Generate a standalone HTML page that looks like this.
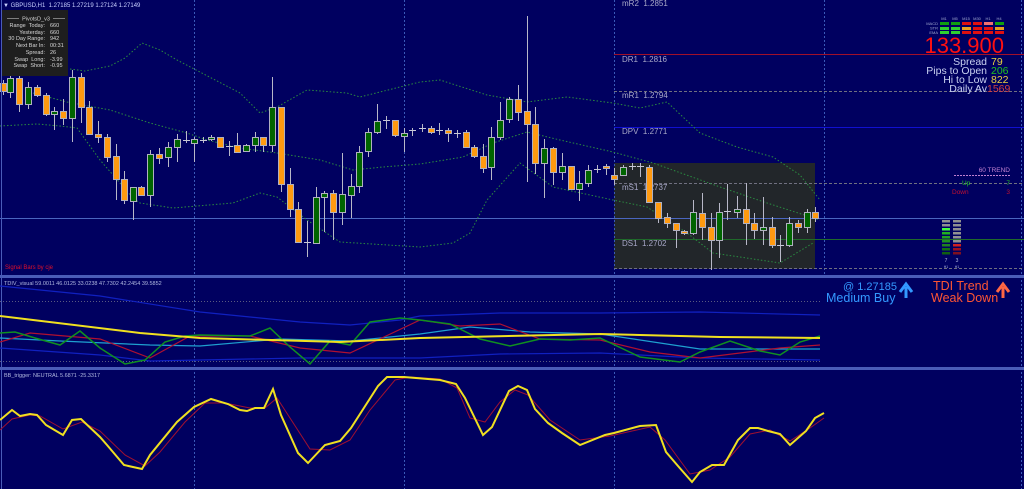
<!DOCTYPE html>
<html><head><meta charset="utf-8"><style>
html,body{margin:0;padding:0;background:#000060;overflow:hidden}
svg{display:block}
text{font-family:"Liberation Sans",sans-serif}
</style></head><body>
<svg width="1024" height="489" viewBox="0 0 1024 489" xmlns="http://www.w3.org/2000/svg">
<rect width="1024" height="489" fill="#000060"/>
<!-- gray box -->
<rect x="614" y="163" width="201" height="106" fill="#22262a"/>
<!-- vertical dashed grid -->
<g stroke="#3a5ab8" stroke-width="1" stroke-dasharray="2,2">
<line x1="194.5" y1="0" x2="194.5" y2="489"/><line x1="404.5" y1="0" x2="404.5" y2="489"/>
<line x1="614.5" y1="0" x2="614.5" y2="489"/><line x1="824.5" y1="0" x2="824.5" y2="276"/>
<line x1="1021.5" y1="0" x2="1021.5" y2="489"/>
</g>
<!-- pivot lines -->
<line x1="614" y1="54.5" x2="1024" y2="54.5" stroke="#a0102a"/>
<line x1="614" y1="91.5" x2="1024" y2="91.5" stroke="#707080" stroke-dasharray="3,2"/>
<line x1="614" y1="127.5" x2="1024" y2="127.5" stroke="#1010d0"/>
<line x1="614" y1="183.5" x2="1024" y2="183.5" stroke="#707080" stroke-dasharray="3,2"/>
<line x1="0" y1="218.5" x2="1024" y2="218.5" stroke="#4a66c0"/>
<line x1="614" y1="239.5" x2="1024" y2="239.5" stroke="#1f6a2a"/>
<line x1="614" y1="268.5" x2="1024" y2="268.5" stroke="#707080" stroke-dasharray="3,2"/>
<g fill="#a8a8c8" font-size="8">
<text x="622" y="6">mR2 &#160;1.2851</text><text x="622" y="62">DR1 &#160;1.2816</text>
<text x="622" y="98">mR1 &#160;1.2794</text><text x="622" y="134">DPV &#160;1.2771</text>
<text x="622" y="190">mS1 &#160;1.2737</text><text x="622" y="246">DS1 &#160;1.2702</text>
</g>
<!-- bollinger -->
<g fill="none" stroke="#2a8a40" stroke-width="1" stroke-dasharray="1.5,2">
<polyline points="70,69 85,71 110,66 125,58 142,43 160,50 177,60 240,93 260,113 277,107 307,90 347,93 360,97 420,82 440,80 487,95 527,102 567,97 613,103 640,108 667,102 700,133 737,147 773,157 800,175 820,200"/>
<polyline points="0,126 37,124 60,126 77,128 100,160 133,198 140,203 173,208 233,203 260,193 277,197 307,220 340,242 420,247 453,243 470,233 487,200 520,163 553,187 613,200 647,207 687,233 713,253 780,263 813,243"/>
<polyline points="33,93 67,102 110,110 150,123 187,133 207,140 240,148 277,153 320,160 353,170 383,167 420,164 463,157 493,143 527,132 560,140 613,152 653,163 720,187 767,203 820,220"/>
</g>
<!-- wicks -->
<path stroke="#b8b8c8" stroke-width="1" fill="none" d="M3.5 80V95M10.5 75V98M19.5 75V112M28.5 82V109M37.5 85V97M46.5 93V116M54.5 107V130M63.5 99V125M72.5 70V142M81.5 73V123M89.5 101V135M98.5 121V143M107.5 134V162M116.5 144V200M124.5 171V204M133.5 187V220M141.5 186V196M150.5 150V207M159.5 148V164M168.5 142V167M177.5 134V162M186.5 131V143M194.5 137V162M203.5 137V143M211.5 135V141M220.5 137V147M229.5 141V156M237.5 133V152M246.5 144V152M255.5 132V152M263.5 137V152M272.5 77V152M281.5 107V192M290.5 168V217M298.5 202V242M307.5 221V257M316.5 187V243M324.5 191V232M333.5 190V240M342.5 153V225M351.5 174V218M359.5 146V193M368.5 128V157M377.5 104V134M386.5 116V129M395.5 120V137M404.5 128V152M412.5 128V136M422.5 124V132M431.5 126V134M439.5 123V135M448.5 128V142M457.5 130V138M466.5 130V148M474.5 145V158M483.5 144V173M491.5 127V180M500.5 102V140M509.5 97V123M518.5 85V121M527.5 16V182M535.5 107V174M544.5 139V198M553.5 147V185M562.5 153V180M571.5 166V189M579.5 171V201M588.5 165V187M597.5 165V173M606.5 164V175M614.5 168V185M623.5 165V176M632.5 163V170M640.5 163V177M649.5 165V203M658.5 202V223M667.5 213V228M676.5 223V248M684.5 230V235M693.5 200V235M702.5 193V240M711.5 213V270M719.5 203V258M727.5 184V220M737.5 196V218M746.5 183V245M754.5 213V239M763.5 197V245M772.5 217V248M780.5 235V262M789.5 217V247M798.5 220V233M807.5 209V233M815.5 207V222"/>
<!-- dojis -->
<path stroke="#c8c8d8" stroke-width="1" d="M183 140.5h7M200 140.5h7M226 146.5h7M304 242.5h7M383 120.5h7M409 130.5h7M419 128.5h7M436 130.5h7M454 133.5h7M594 169.5h7M629 166.5h7M637 166.5h7M724 211.5h7M777 245.5h7"/>
<!-- orange bodies -->
<g fill="#ff9a10" stroke="#b0b0c0" stroke-width="1">
<rect x="0.5" y="83.5" width="6" height="8"/><rect x="16.5" y="78.5" width="6" height="26"/><rect x="34.5" y="87.5" width="6" height="8"/><rect x="43.5" y="95.5" width="6" height="19"/><rect x="60.5" y="111.5" width="6" height="7"/><rect x="78.5" y="77.5" width="6" height="30"/><rect x="86.5" y="107.5" width="6" height="27"/><rect x="95.5" y="134.5" width="6" height="3"/><rect x="104.5" y="137.5" width="6" height="20"/><rect x="113.5" y="156.5" width="6" height="23"/><rect x="121.5" y="179.5" width="6" height="21"/><rect x="138.5" y="187.5" width="6" height="8"/><rect x="156.5" y="154.5" width="6" height="4"/><rect x="217.5" y="137.5" width="6" height="10"/><rect x="234.5" y="145.5" width="6" height="7"/><rect x="260.5" y="137.5" width="6" height="8"/><rect x="278.5" y="107.5" width="6" height="77"/><rect x="287.5" y="184.5" width="6" height="25"/><rect x="295.5" y="209.5" width="6" height="33"/><rect x="330.5" y="193.5" width="6" height="19"/><rect x="392.5" y="120.5" width="6" height="15"/><rect x="428.5" y="128.5" width="6" height="4"/><rect x="445.5" y="130.5" width="6" height="3"/><rect x="463.5" y="132.5" width="6" height="15"/><rect x="471.5" y="147.5" width="6" height="9"/><rect x="480.5" y="156.5" width="6" height="12"/><rect x="515.5" y="99.5" width="6" height="13"/><rect x="524.5" y="111.5" width="6" height="13"/><rect x="532.5" y="124.5" width="6" height="39"/><rect x="550.5" y="148.5" width="6" height="24"/><rect x="568.5" y="166.5" width="6" height="23"/><rect x="603.5" y="166.5" width="6" height="2"/><rect x="611.5" y="175.5" width="6" height="4"/><rect x="646.5" y="167.5" width="6" height="35"/><rect x="655.5" y="202.5" width="6" height="16"/><rect x="664.5" y="217.5" width="6" height="6"/><rect x="673.5" y="223.5" width="6" height="7"/><rect x="681.5" y="231.5" width="6" height="2"/><rect x="699.5" y="213.5" width="6" height="14"/><rect x="708.5" y="227.5" width="6" height="13"/><rect x="743.5" y="209.5" width="6" height="14"/><rect x="751.5" y="223.5" width="6" height="7"/><rect x="769.5" y="227.5" width="6" height="18"/><rect x="795.5" y="223.5" width="6" height="4"/><rect x="812.5" y="212.5" width="6" height="6"/>
</g>
<!-- green bodies -->
<g fill="#006400" stroke="#b0b0c0" stroke-width="1">
<rect x="7.5" y="78.5" width="6" height="14"/><rect x="25.5" y="87.5" width="6" height="17"/><rect x="51.5" y="111.5" width="6" height="3"/><rect x="69.5" y="77.5" width="6" height="41"/><rect x="130.5" y="187.5" width="6" height="14"/><rect x="147.5" y="154.5" width="6" height="41"/><rect x="165.5" y="147.5" width="6" height="10"/><rect x="174.5" y="139.5" width="6" height="8"/><rect x="191.5" y="139.5" width="6" height="4"/><rect x="208.5" y="137.5" width="6" height="2"/><rect x="243.5" y="145.5" width="6" height="6"/><rect x="252.5" y="137.5" width="6" height="8"/><rect x="269.5" y="107.5" width="6" height="38"/><rect x="313.5" y="197.5" width="6" height="46"/><rect x="321.5" y="193.5" width="6" height="4"/><rect x="339.5" y="194.5" width="6" height="18"/><rect x="348.5" y="186.5" width="6" height="9"/><rect x="356.5" y="152.5" width="6" height="34"/><rect x="365.5" y="132.5" width="6" height="19"/><rect x="374.5" y="121.5" width="6" height="11"/><rect x="401.5" y="133.5" width="6" height="3"/><rect x="488.5" y="137.5" width="6" height="30"/><rect x="497.5" y="120.5" width="6" height="17"/><rect x="506.5" y="99.5" width="6" height="20"/><rect x="541.5" y="148.5" width="6" height="15"/><rect x="559.5" y="166.5" width="6" height="6"/><rect x="576.5" y="183.5" width="6" height="6"/><rect x="585.5" y="170.5" width="6" height="13"/><rect x="620.5" y="167.5" width="6" height="8"/><rect x="690.5" y="212.5" width="6" height="21"/><rect x="716.5" y="212.5" width="6" height="28"/><rect x="734.5" y="209.5" width="6" height="3"/><rect x="760.5" y="227.5" width="6" height="3"/><rect x="786.5" y="223.5" width="6" height="22"/><rect x="804.5" y="212.5" width="6" height="15"/>
</g>
<!-- header -->
<text x="3" y="7" font-size="6" fill="#c8d0ff">▼ GBPUSD,H1 &#160;1.27185 1.27219 1.27124 1.27149</text>
<!-- pivot info box -->
<rect x="2" y="10" width="66" height="66" fill="#1e1e1e"/>
<g font-size="5.5" fill="#d8d8d8">
<line x1="7" y1="18.5" x2="19" y2="18.5" stroke="#c0c0c0" stroke-width="0.6"/>
<line x1="53" y1="18.5" x2="65" y2="18.5" stroke="#c0c0c0" stroke-width="0.6"/>
<text x="36" y="20.5" text-anchor="middle">PivotsD_v3</text>
<g text-anchor="end"><text x="45" y="27">Range &#160;Today:</text><text x="45" y="34">Yesterday:</text><text x="45" y="40">30 Day Range:</text><text x="45" y="47">Next Bar In:</text><text x="45" y="54">Spread:</text><text x="45" y="61">Swap &#160;Long:</text><text x="45" y="67">Swap &#160;Short:</text></g>
<text x="50" y="27">660</text><text x="50" y="34">660</text><text x="50" y="40">942</text><text x="50" y="47">00:31</text><text x="50" y="54">26</text><text x="50" y="61">-3.99</text><text x="50" y="67">-0.95</text>
</g>
<text x="5" y="269" font-size="6" fill="#e0102a">Signal Bars by cje</text>
<!-- right panel -->
<g font-size="4" fill="#a0a8d0" text-anchor="middle"><text x="944" y="20">M1</text><text x="955" y="20">M5</text><text x="966" y="20">M15</text><text x="977" y="20">M30</text><text x="988" y="20">H1</text><text x="999" y="20">H4</text></g>
<g font-size="4" fill="#a0a8d0" text-anchor="end"><text x="938" y="25">MACD</text><text x="938" y="29.5">STR</text><text x="938" y="34">EMA</text></g>
<g>
<rect x="940" y="22" width="9" height="3" fill="#10a010"/><rect x="951" y="22" width="9" height="3" fill="#10a010"/><rect x="962" y="22" width="9" height="3" fill="#e01010"/><rect x="973" y="22" width="9" height="3" fill="#e01010"/><rect x="984" y="22" width="9" height="3" fill="#f07070"/><rect x="995" y="22" width="9" height="3" fill="#10a010"/>
<rect x="940" y="27" width="9" height="3" fill="#30d030"/><rect x="951" y="27" width="9" height="3" fill="#30d030"/><rect x="962" y="27" width="9" height="3" fill="#e8a020"/><rect x="973" y="27" width="9" height="3" fill="#e01010"/><rect x="984" y="27" width="9" height="3" fill="#e01010"/><rect x="995" y="27" width="9" height="3" fill="#e8a020"/>
<rect x="940" y="31" width="9" height="3" fill="#30d030"/><rect x="951" y="31" width="9" height="3" fill="#30d030"/><rect x="962" y="31" width="9" height="3" fill="#e01010"/><rect x="973" y="31" width="9" height="3" fill="#e01010"/><rect x="984" y="31" width="9" height="3" fill="#e01010"/><rect x="995" y="31" width="9" height="3" fill="#e01010"/>
</g>
<text x="1004" y="53" font-size="22" fill="#ff1010" text-anchor="end">133.900</text>
<g font-size="10.5" fill="#c8d0f0" text-anchor="end"><text x="987" y="65">Spread</text><text x="987" y="74">Pips to Open</text><text x="987" y="83">Hi to Low</text><text x="987" y="92">Daily Av</text></g>
<g font-size="10.5"><text x="991" y="65" fill="#e8d040">79</text><text x="991" y="74" fill="#20c020">206</text><text x="991" y="83" fill="#e8d040">822</text><text x="987" y="92" fill="#d04040">1569</text></g>
<text x="1010" y="172" font-size="6.5" fill="#c080d0" text-anchor="end">60 TREND</text>
<line x1="954" y1="175.5" x2="1010" y2="175.5" stroke="#c080d0" stroke-dasharray="2,1"/>
<text x="962" y="185" font-size="6.5" fill="#20c020">Up</text><text x="1010" y="185" font-size="6.5" fill="#20c020" text-anchor="end">7</text>
<text x="952" y="194" font-size="6.5" fill="#c01030">Down</text><text x="1010" y="194" font-size="6.5" fill="#c01030" text-anchor="end">3</text>
<g>
<rect x="942" y="220" width="8" height="2.5" fill="#909090"/><rect x="942" y="224" width="8" height="2.5" fill="#909090"/><rect x="942" y="228" width="8" height="2.5" fill="#40ff40"/><rect x="942" y="232" width="8" height="2.5" fill="#20b020"/><rect x="942" y="236" width="8" height="2.5" fill="#20a020"/><rect x="942" y="240" width="8" height="2.5" fill="#209020"/><rect x="942" y="244" width="8" height="2.5" fill="#208020"/><rect x="942" y="248" width="8" height="2.5" fill="#107010"/><rect x="942" y="252" width="8" height="2.5" fill="#106010"/>
<rect x="953" y="220" width="8" height="2.5" fill="#909090"/><rect x="953" y="224" width="8" height="2.5" fill="#909090"/><rect x="953" y="228" width="8" height="2.5" fill="#909090"/><rect x="953" y="232" width="8" height="2.5" fill="#909090"/><rect x="953" y="236" width="8" height="2.5" fill="#909090"/><rect x="953" y="240" width="8" height="2.5" fill="#909090"/><rect x="953" y="244" width="8" height="2.5" fill="#d02020"/><rect x="953" y="248" width="8" height="2.5" fill="#a01020"/><rect x="953" y="252" width="8" height="2.5" fill="#801020"/>
</g>
<g font-size="5" fill="#b0b8e0" text-anchor="middle"><text x="946" y="262">7</text><text x="957" y="262">3</text><text x="946" y="268" font-size="3.5">H1</text><text x="957" y="268" font-size="3.5">H1</text></g>
<!-- separators -->
<rect x="0" y="275" width="1024" height="3" fill="#4a5cb8"/>
<rect x="0" y="367" width="1024" height="3" fill="#4a5cb8"/>
<line x1="1.5" y1="0" x2="1.5" y2="489" stroke="#4a5cb8"/>
<!-- TDI pane right text -->
<text x="843" y="290" font-size="11" fill="#3399ff">@ 1.27185</text>
<text x="826" y="302" font-size="12.5" fill="#3399ff">Medium Buy</text>
<path d="M906 298V287M900 292L906 284L912 292" stroke="#3399ff" stroke-width="3" fill="none"/>
<text x="933" y="290" font-size="12.5" fill="#ff5533">TDI Trend</text>
<text x="931" y="302" font-size="12.5" fill="#ff5533">Weak Down</text>
<path d="M1003 298V287M997 292L1003 284L1009 292" stroke="#ff6644" stroke-width="3" fill="none"/>
<text x="4" y="285" font-size="5.5" fill="#b0b8e0">TDIV_visual 59.0011 46.0125 33.0238 47.7302 42.2454 39.5852</text>
<g stroke="#5a5a80" stroke-dasharray="1,2"><line x1="0" y1="301.5" x2="820" y2="301.5"/><line x1="0" y1="361.5" x2="820" y2="361.5"/></g>
<g fill="none" stroke-width="1.2">
<polyline stroke="#1020c0" points="0,286 100,296 200,312 300,322 350,325 400,320 420,316 500,313 600,313 700,312 820,315"/>
<polyline stroke="#1020c0" points="0,348 100,355 150,361 200,360 300,358 420,358 500,354 600,353 700,358 820,360"/>
<polyline stroke="#1ea0d0" points="0,338 60,341 150,345 200,346 280,339 350,341 420,334 470,327 530,332 600,334 700,349 800,349 820,349"/>
<polyline stroke="#b01030" points="0,342 30,333 100,339 150,358 190,336 250,336 300,348 350,353 420,320 460,326 500,324 540,339 600,340 650,352 700,358 780,348 820,345"/>
<polyline stroke="#109020" stroke-width="1.5" points="0,333 15,332 35,338 60,345 80,331 100,348 125,364 145,360 165,342 185,336 200,335 250,336 270,328 290,347 310,364 330,341 350,345 370,322 400,318 420,320 450,324 480,339 510,346 540,339 570,340 600,338 640,357 680,362 700,352 730,341 760,351 780,355 800,342 820,336"/>
<polyline stroke="#f0e020" stroke-width="2" points="0,316 140,333 200,338 340,342 420,338 600,334 720,337 820,338"/>
</g>
<!-- BB pane -->
<text x="4" y="377" font-size="5.5" fill="#b0b8e0">BB_trigger: NEUTRAL 5.6871 -25.3317</text>
<polyline fill="none" stroke="#a01030" stroke-width="1" points="0,430 12,419 30,415 40,416 63,429 82,422 100,431 125,455 145,466 160,452 185,422 205,403 225,403 250,408 265,408 277,398 290,418 310,449 330,450 350,440 370,410 395,380 410,377 440,379 457,388 470,418 485,422 500,402 515,390 528,395 550,420 580,440 610,436 650,427 665,440 690,474 710,470 730,457 750,434 770,430 790,441 810,428 824,418"/>
<polyline fill="none" stroke="#f0e020" stroke-width="2" points="0,420 12,410 20,416 30,414 37,415 46,425 63,435 72,420 81,419 100,437 107,445 124,465 142,469 150,455 177,422 194,407 211,399 228,404 240,410 247,411 255,408 264,408 273,389 281,415 298,453 308,463 325,445 340,441 351,428 378,386 387,377 404,377 440,380 456,384 465,398 483,435 492,427 509,391 518,386 527,390 535,409 548,423 562,433 580,445 605,435 614,433 640,426 656,425 666,452 678,466 692,482 700,472 712,465 724,465 738,440 750,428 758,428 768,431 780,434 790,445 806,431 815,418 824,413"/>
</svg>
</body></html>
